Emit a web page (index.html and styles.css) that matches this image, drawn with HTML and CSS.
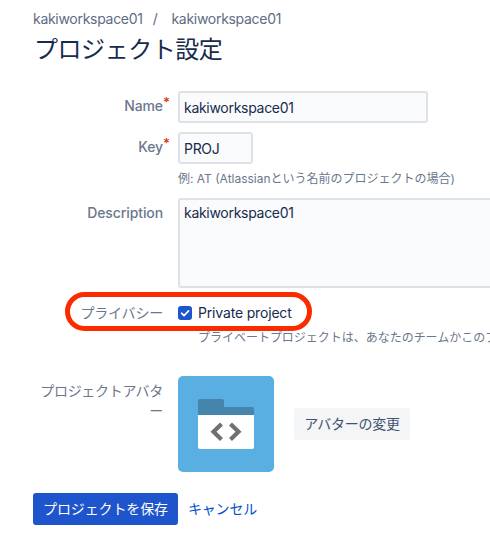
FILE: index.html
```html
<!DOCTYPE html>
<html lang="ja">
<head>
<meta charset="utf-8">
<title>プロジェクト設定</title>
<link rel="stylesheet" href="styles.css">
</head>
<body>
<main class="page">
  <nav class="breadcrumbs"><span class="crumb">kakiworkspace01</span><span class="sep">/</span><span class="crumb">kakiworkspace01</span></nav>
  <h1 class="title">プロジェクト設定</h1>
  <form class="form">
    <div class="row row-name">
      <label class="label required" for="name"><span class="latin">Name</span></label>
      <input class="input" id="name" type="text" value="kakiworkspace01">
    </div>
    <div class="row row-key">
      <label class="label required" for="key"><span class="latin">Key</span></label>
      <div class="field">
        <input class="input input-key" id="key" type="text" value="PROJ">
        <p class="help">例: AT (Atlassianという名前のプロジェクトの場合)</p>
      </div>
    </div>
    <div class="row row-desc">
      <label class="label" for="desc"><span class="latin desc-label">Description</span></label>
      <textarea class="input textarea" id="desc">kakiworkspace01</textarea>
    </div>
    <div class="row row-privacy">
      <span class="label privacy-label">プライバシー</span>
      <div class="field">
        <label class="check">
          <svg class="box" viewBox="0 0 14 14"><rect width="14" height="14" rx="3" fill="#1f55cc"/><path d="M3.5 7.2 6 9.6 10.6 4.9" fill="none" stroke="#fff" stroke-width="1.6" stroke-linecap="round" stroke-linejoin="round"/></svg>
          <span class="check-text">Private project</span>
        </label>
        <p class="help privacy-help">プライベートプロジェクトは、あなたのチームかこのプ</p>
      </div>
      <div class="highlight"></div>
    </div>
    <div class="row row-avatar">
      <span class="label avatar-label">プロジェクトアバター</span>
      <div class="avatar-field">
        <svg class="avatar" viewBox="0 0 96 96"><rect width="96" height="96" rx="5" fill="#59afe1"/><path d="M20 40V25q0-2 2-2h22q2 0 2 2v6h28q2 0 2 2v7z" fill="#4584ab"/><path d="M20 39h56v32q0 2-2 2H22q-2 0-2-2z" fill="#fff"/><path d="M43.5 48 35.5 55.8l8 7.8M52.5 48l8 7.8-8 7.8" fill="none" stroke="#707070" stroke-width="4.2"/></svg>
        <button class="button" type="button">アバターの変更</button>
      </div>
    </div>
    <div class="actions">
      <button class="button primary" type="submit">プロジェクトを保存</button>
      <a class="cancel">キャンセル</a>
    </div>
  </form>
</main>
</body>
</html>
```
FILE: styles.css
```css
* { box-sizing: border-box; }
body {
  margin: 0;
  overflow: hidden;
  background: #fff;
  color: #172b4d;
  font: 14px/20px Inter, "Noto Sans CJK JP", sans-serif;
}
.page { width: 490px; padding: 9px 0 0 33px; overflow: hidden; }
.breadcrumbs { display: flex; height: 20px; color: #5e6c84; letter-spacing: -0.29px; }
.sep { margin: 0 14px 0 10px; }
.title {
  margin: 7px 0 27px;
  height: 28px;
  font-size: 24px;
  font-weight: 400;
  line-height: 28px;
  letter-spacing: -0.45px;
  padding-left: 1px;
}
.row { display: grid; grid-template-columns: 130px 1fr; column-gap: 15px; position: relative; }
.label { color: #6b778c; text-align: right; }
.latin { font-weight: 500; letter-spacing: -0.1px; }
.required { padding-top: 5px; position: relative; }
.required::after {
  content: "*";
  position: absolute;
  left: 130px;
  top: 1px;
  color: #de350b;
  font-size: 13px;
  font-weight: 600;
}
.input {
  display: block;
  width: 250px;
  height: 32px;
  margin: 0;
  padding: 2px 4px;
  border: 2px solid #dfe1e6;
  border-radius: 3px;
  background: #fafbfc;
  color: #172b4d;
  font: inherit;
  letter-spacing: -0.29px;
}
.row-name { height: 41px; }
.row-key { height: 66px; }
.input-key { width: 75px; }
.help { margin: 5px 0 0; color: #6b778c; font-size: 12px; line-height: 20px; white-space: nowrap; }
.row-desc { height: 103px; }
.desc-label { display: block; padding-top: 5px; }
.textarea { width: 330px; height: 90px; padding-top: 3px; resize: none; overflow: hidden; }
.row-privacy { height: 75px; }
.privacy-label { padding-top: 2px; letter-spacing: -0.2px; }
.check { display: flex; height: 24px; align-items: center; }
.box { width: 14px; height: 14px; margin-right: 6px; }
.check-text { letter-spacing: -0.17px; }
.privacy-help { margin: 3px 0 0 20px; letter-spacing: -0.02px; }
.highlight {
  position: absolute;
  left: 32px;
  top: -9px;
  width: 247px;
  height: 39px;
  border: 5px solid #fb2b00;
  border-radius: 20px;
}
.avatar-label { padding-top: 5px; letter-spacing: -0.3px; }
.avatar-field { display: flex; align-items: center; gap: 20px; }
.avatar { width: 96px; height: 96px; }
.button {
  height: 32px;
  padding: 0 10px;
  border: 0;
  border-radius: 3px;
  background: #f4f5f7;
  color: #42526e;
  font: inherit;
  letter-spacing: -0.25px;
  white-space: nowrap;
}
.avatar-field .button { width: 116px; }
.actions { display: flex; align-items: center; gap: 10px; margin-top: 21px; }
.primary { width: 145px; background: #1f55cc; color: #fff; letter-spacing: -0.12px; }
.cancel { color: #0052cc; letter-spacing: -0.2px; }
```
